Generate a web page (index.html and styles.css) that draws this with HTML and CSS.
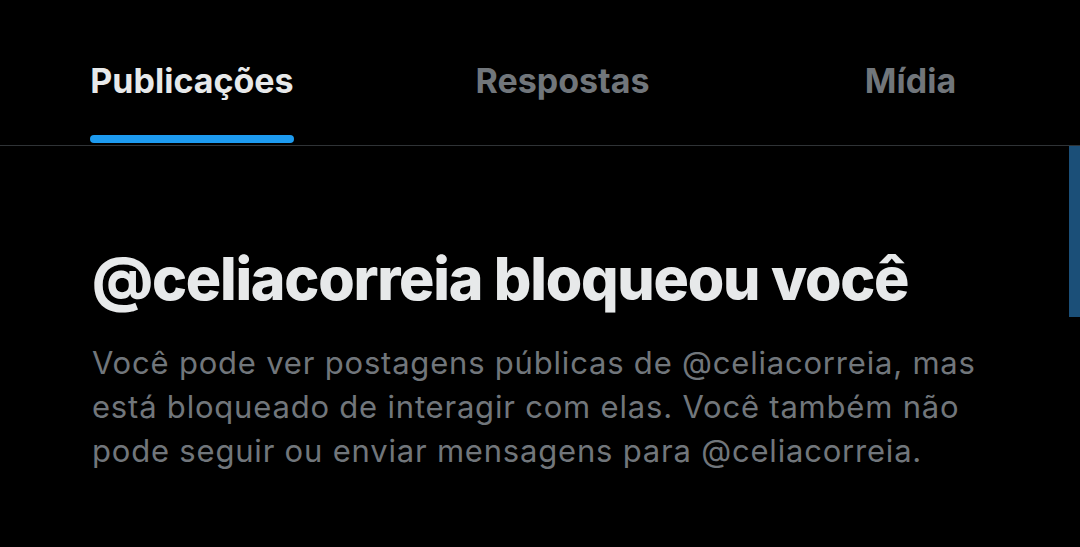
FILE: index.html
```html
<!DOCTYPE html>
<html lang="pt">
<head>
<meta charset="utf-8">
<link rel="stylesheet" href="styles.css">
</head>
<body>
<div class="page">
  <nav class="tabs">
    <div class="tab active"><span class="label">Publicações<span class="bar"></span></span></div>
    <div class="tab"><span class="label">Respostas</span></div>
    <div class="tab"><span class="label">Mídia</span></div>
  </nav>
  <main class="content">
    <h1 class="title">@celiacorreia bloqueou você</h1>
    <p class="desc">Você pode ver postagens públicas de @celiacorreia, mas está bloqueado de interagir com elas. Você também não pode seguir ou enviar mensagens para @celiacorreia.</p>
  </main>
  <div class="scroll"></div>
</div>
</body>
</html>
```
FILE: styles.css
```css
html, body {
  margin: 0;
  padding: 0;
  background: #000;
}
.page {
  position: relative;
  width: 1080px;
  height: 547px;
  overflow: hidden;
  background: #000;
  font-family: "Inter", "Roboto", sans-serif;
}
.tabs {
  display: grid;
  grid-template-columns: 384px 357px 339px;
  height: 146px;
  border-bottom: 1px solid #2f3336;
  box-sizing: border-box;
}
.tab {
  display: flex;
  justify-content: center;
  align-items: flex-start;
}
.label {
  position: relative;
  display: inline-block;
  margin-top: 61px;
  font-size: 34px;
  font-weight: 700;
  line-height: 40px;
  color: #71767b;
}
.tab.active .label {
  color: #e7e9ea;
}
.bar {
  position: absolute;
  left: 0;
  right: 0;
  top: 74px;
  height: 8px;
  border-radius: 4px;
  background: #1d9bf0;
}
.content {
  padding: 101px 92px 0 92px;
}
.title {
  margin: 0;
  font-size: 59px;
  line-height: 64px;
  font-weight: 800;
  color: #e7e9ea;
  letter-spacing: -1.25px;
  white-space: nowrap;
}
.desc {
  margin: 30px 0 0 0;
  font-size: 31px;
  line-height: 44px;
  letter-spacing: 0.8px;
  color: #71767b;
}
.scroll {
  position: absolute;
  right: 0;
  top: 146px;
  width: 11px;
  height: 171px;
  background: #1b4f78;
}
```
